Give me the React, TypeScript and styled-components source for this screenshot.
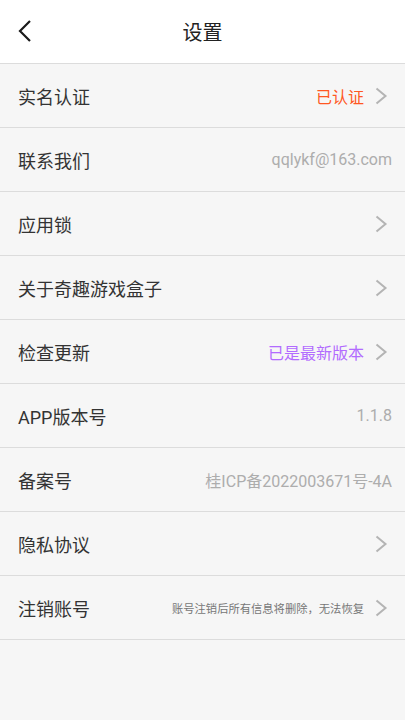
import React from 'react';
import styled, { createGlobalStyle } from 'styled-components';

const GlobalStyle = createGlobalStyle`
    html, body {
        margin: 0;
        padding: 0;
        background-color: #f6f6f6;
    }
    body {
        font-family: Roboto, "Noto Sans CJK SC", sans-serif;
    }
`;

const Page = styled.div`
    width: 405px;
    min-height: 720px;
    background-color: #f6f6f6;
    display: flex;
    flex-direction: column;
`;

const Header = styled.div`
    height: 63px;
    background-color: #ffffff;
    border-bottom: 1px solid #dcdcdc;
    display: grid;
    grid-template-columns: 60px 1fr 60px;
    align-items: center;
`;

const BackButton = styled.div`
    display: flex;
    align-items: center;
    padding-left: 17px;
    padding-bottom: 1px;
    height: 100%;
`;

const Title = styled.div`
    text-align: center;
    font-size: 20px;
    color: #222;
    padding-bottom: 1px;
`;

const List = styled.div`
    display: flex;
    flex-direction: column;
`;

const Row = styled.div`
    height: 63px;
    border-bottom: 1px solid #dcdcdc;
    display: flex;
    align-items: center;
    justify-content: space-between;
    padding: 0 13px 0 18px;
`;

const Label = styled.div`
    font-size: 18px;
    color: #333;
`;

const Right = styled.div`
    display: flex;
    align-items: center;
`;

const Value = styled.div<{ $color?: string; $small?: boolean }>`
    font-size: ${(p) => (p.$small ? '11.3px' : '16px')};
    color: ${(p) => p.$color || '#adadad'};
`;

const Arrow = styled.svg`
    width: 22px;
    height: 24px;
    margin-left: 6px;
    display: block;
`;

interface SettingItem {
    label: string;
    value?: string;
    color?: string;
    small?: boolean;
    arrow?: boolean;
}

const ITEMS: SettingItem[] = [
    { label: '实名认证', value: '已认证', color: '#ff5722', arrow: true },
    { label: '联系我们', value: 'qqlykf@163.com' },
    { label: '应用锁', arrow: true },
    { label: '关于奇趣游戏盒子', arrow: true },
    { label: '检查更新', value: '已是最新版本', color: '#b26bff', arrow: true },
    { label: 'APP版本号', value: '1.1.8' },
    { label: '备案号', value: '桂ICP备2022003671号-4A' },
    { label: '隐私协议', arrow: true },
    { label: '注销账号', value: '账号注销后所有信息将删除，无法恢复', color: '#777', small: true, arrow: true },
];

const ChevronRight = () => (
    <Arrow viewBox="0 0 22 24">
        <path d="M6.5 4.5 L15.5 12 L6.5 19.5" fill="none" stroke="#b4b4b4" strokeWidth="2" />
    </Arrow>
);

const App: React.FC = () => {
    return (
        <Page>
            <GlobalStyle />
            <Header>
                <BackButton>
                    <svg width="16" height="24" viewBox="0 0 16 24">
                        <path d="M13 2 L3 12 L13 22" fill="none" stroke="#1a1a1a" strokeWidth="2.2" />
                    </svg>
                </BackButton>
                <Title>设置</Title>
                <div />
            </Header>
            <List>
                {ITEMS.map((item) => (
                    <Row key={item.label}>
                        <Label>{item.label}</Label>
                        <Right>
                            {item.value && (
                                <Value $color={item.color} $small={item.small}>{item.value}</Value>
                            )}
                            {item.arrow && <ChevronRight />}
                        </Right>
                    </Row>
                ))}
            </List>
        </Page>
    );
};

export default App;
